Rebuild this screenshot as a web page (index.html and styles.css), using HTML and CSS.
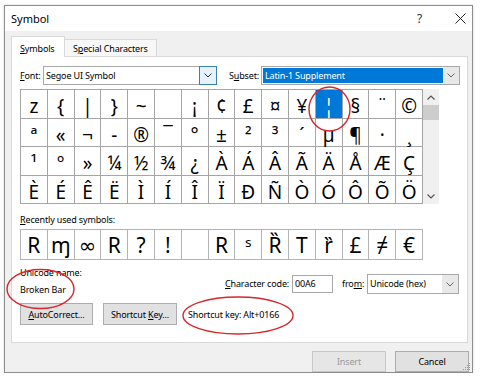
FILE: index.html
```html
<!DOCTYPE html>
<html lang="en">
<head>
    <meta charset="UTF-8">
    <meta name="viewport" content="width=device-width, initial-scale=1.0">
    <title>Symbol</title>
    <link rel="stylesheet" href="styles.css">
</head>
<body>
    <div class="dialog">
        <div class="titlebar">
            <span class="title">Symbol</span>
            <span class="help">?</span>
            <span class="close">
                <svg width="11" height="11" viewBox="0 0 11 11"><path d="M0.5 0.5 L10.5 10.5 M10.5 0.5 L0.5 10.5" stroke="#222" stroke-width="1" fill="none"/></svg>
            </span>
        </div>

        <div class="content">
            <div class="tabs">
                <div class="tab active"><u>S</u>ymbols</div>
                <div class="tab">S<u>p</u>ecial Characters</div>
            </div>

            <div class="panel">
                <div class="font-row">
                    <span class="lbl font-lbl"><u>F</u>ont:</span>
                    <div class="combo font-combo">
                        <span class="combo-text">Segoe UI Symbol</span>
                        <span class="drop hot"><svg width="8" height="5" viewBox="0 0 8 5"><path d="M0.5 0.5 L4 4 L7.5 0.5" stroke="#333" fill="none"/></svg></span>
                    </div>
                    <span class="lbl subset-lbl">S<u>u</u>bset:</span>
                    <div class="combo subset-combo">
                        <span class="combo-text selected">Latin-1 Supplement</span>
                        <span class="drop"><svg width="8" height="5" viewBox="0 0 8 5"><path d="M0.5 0.5 L4 4 L7.5 0.5" stroke="#666" fill="none"/></svg></span>
                    </div>
                </div>

                <div class="grid-wrap">
                    <div class="grid chars">
                        <span>z</span><span>{</span><span>|</span><span>}</span><span>~</span><span>&nbsp;</span><span>¡</span><span>¢</span><span>£</span><span>¤</span><span>¥</span><span class="sel">¦</span><span>§</span><span>¨</span><span>©</span>
                        <span>ª</span><span>«</span><span>¬</span><span>-</span><span>®</span><span>¯</span><span>°</span><span>±</span><span>²</span><span>³</span><span>´</span><span>µ</span><span>¶</span><span>·</span><span>¸</span>
                        <span>¹</span><span>º</span><span>»</span><span>¼</span><span>½</span><span>¾</span><span>¿</span><span>À</span><span>Á</span><span>Â</span><span>Ã</span><span>Ä</span><span>Å</span><span>Æ</span><span>Ç</span>
                        <span>È</span><span>É</span><span>Ê</span><span>Ë</span><span>Ì</span><span>Í</span><span>Î</span><span>Ï</span><span>Ð</span><span>Ñ</span><span>Ò</span><span>Ó</span><span>Ô</span><span>Õ</span><span>Ö</span>
                    </div>
                    <div class="scrollbar">
                        <span class="arrow"><svg width="8" height="5" viewBox="0 0 8 5"><path d="M0.5 4.5 L4 1 L7.5 4.5" stroke="#555" stroke-width="1.2" fill="none"/></svg></span>
                        <span class="thumb"></span>
                        <span class="track"></span>
                        <span class="arrow"><svg width="8" height="5" viewBox="0 0 8 5"><path d="M0.5 0.5 L4 4 L7.5 0.5" stroke="#555" stroke-width="1.2" fill="none"/></svg></span>
                    </div>
                </div>

                <div class="recent-lbl"><u>R</u>ecently used symbols:</div>
                <div class="grid recent">
                    <span>R</span><span>ɱ</span><span>∞</span><span>R</span><span>?</span><span>!</span><span>&nbsp;</span><span>R</span><span>ˢ</span><span>Ȑ</span><span>T</span><span>ȑ</span><span>£</span><span>≠</span><span>€</span>
                </div>

                <div class="info-row">
                    <div class="name-col">
                        <div>Unicode name:</div>
                        <div class="name">Broken Bar</div>
                    </div>
                    <div class="code-row">
                        <span class="lbl code-lbl"><u>C</u>haracter code:</span>
                        <div class="field">00A6</div>
                        <span class="lbl from-lbl">fro<u>m</u>:</span>
                        <div class="combo from-combo">
                            <span class="combo-text">Unicode (hex)</span>
                            <span class="drop"><svg width="8" height="5" viewBox="0 0 8 5"><path d="M0.5 0.5 L4 4 L7.5 0.5" stroke="#666" fill="none"/></svg></span>
                        </div>
                    </div>
                </div>

                <div class="action-row">
                    <button class="btn autocorrect"><u>A</u>utoCorrect...</button>
                    <button class="btn shortcut">Shortcut <u>K</u>ey...</button>
                    <span class="shortcut-text">Shortcut key: Alt+0166</span>
                </div>
            </div>

            <div class="footer">
                <button class="btn big" disabled>Insert</button>
                <button class="btn big">Cancel</button>
            </div>
        </div>

        <svg class="grip" width="8" height="8" viewBox="0 0 8 8">
            <rect x="6" y="0" width="1" height="1" fill="#999"/>
            <rect x="4" y="2" width="1" height="1" fill="#999"/>
            <rect x="6" y="2" width="1" height="1" fill="#999"/>
            <rect x="2" y="4" width="1" height="1" fill="#999"/>
            <rect x="4" y="4" width="1" height="1" fill="#999"/>
            <rect x="6" y="4" width="1" height="1" fill="#999"/>
            <rect x="0" y="6" width="1" height="1" fill="#999"/>
            <rect x="2" y="6" width="1" height="1" fill="#999"/>
            <rect x="4" y="6" width="1" height="1" fill="#999"/>
            <rect x="6" y="6" width="1" height="1" fill="#999"/>
        </svg>
    </div>

    <!-- hand-drawn red marks over the dialog -->
    <svg class="marks" width="480" height="377" viewBox="0 0 480 377">
        <ellipse cx="329.5" cy="109" rx="20.5" ry="22" fill="none" stroke="#d8262c" stroke-width="1.4"/>
        <ellipse cx="40.5" cy="289" rx="33.5" ry="19.5" fill="none" stroke="#d8262c" stroke-width="1.4"/>
        <ellipse cx="238" cy="315.5" rx="55" ry="18.5" fill="none" stroke="#d8262c" stroke-width="1.4"/>
    </svg>
</body>
</html>
```

FILE: styles.css
```css
body {
    margin: 0;
    background-color: #ffffff;
    font-family: "Noto Sans", sans-serif;
    font-size: 9px;
    letter-spacing: -0.15px;
    color: #000;
}

u {
    text-decoration-thickness: 1px;
    text-underline-offset: 1px;
}

.dialog {
    position: relative;
    margin: 5px 0 0 4px;
    width: 467px;
    height: 366px;
    border: 1px solid #8c8c8c;
    background-color: #f0f0f0;
    box-shadow: 0 0 3px rgba(0, 0, 0, 0.15);
    display: flex;
    flex-direction: column;
}

.titlebar {
    height: 27px;
    background: #ffffff;
    display: flex;
    align-items: center;
    padding-left: 6px;
}

.title {
    font-size: 11px;
    letter-spacing: 0;
    flex: 1;
}

.help {
    font-size: 12px;
    color: #333;
    width: 38px;
}

.close {
    width: 17px;
    display: flex;
    align-items: center;
}

.content {
    padding: 5px 4px 0 6px;
}

.tabs {
    display: flex;
    align-items: flex-end;
    height: 20px;
}

.tab {
    height: 17px;
    box-sizing: border-box;
    border: 1px solid #d9d9d9;
    border-bottom: none;
    border-left: none;
    padding: 0 0 0 8px;
    width: 92px;
    display: flex;
    align-items: center;
    white-space: nowrap;
    background: #f7f7f7;
}

.tab.active {
    height: 21px;
    width: 54px;
    margin-bottom: -1px;
    border-left: 1px solid #d9d9d9;
    background: #ffffff;
    position: relative;
    padding-top: 2px;
}

.panel {
    height: 276px;
    border: 1px solid #d9d9d9;
    background: #ffffff;
    padding: 9px 0 0 8px;
    box-sizing: content-box;
}

.lbl {
    white-space: nowrap;
    flex-shrink: 0;
}

.font-row {
    display: flex;
    align-items: center;
    height: 19px;
}

.font-lbl {
    width: 23px;
}

.subset-lbl {
    margin-left: 12px;
    width: 32px;
}

.combo {
    height: 19px;
    box-sizing: border-box;
    border: 1px solid #a8a8a8;
    display: flex;
    align-items: stretch;
    background: #fff;
    flex-shrink: 0;
}

.combo-text {
    flex: 1;
    display: flex;
    align-items: center;
    padding-left: 2px;
    white-space: nowrap;
}

.combo-text.selected {
    background: #0078d7;
    color: #fff;
    margin: 1px 0 1px 1px;
}

.drop {
    width: 16px;
    display: flex;
    align-items: center;
    justify-content: center;
    background: #e8e8e8;
}

.drop.hot {
    background: #e5f1fb;
    border: 1px solid #3c7fb1;
    margin: -1px -1px -1px 0;
}

.font-combo {
    width: 174px;
}

.subset-combo {
    width: 199px;
}

.grid-wrap {
    display: flex;
    margin-top: 4px;
}

.grid {
    display: grid;
    width: max-content;
    grid-template-columns: repeat(15, 25.8px);
    gap: 1px;
    padding: 1px;
    background: #a5a5a5;
    font-family: "Noto Sans", "DejaVu Sans", sans-serif;
    letter-spacing: 0;
}

.grid span {
    background: #fff;
    display: flex;
    justify-content: center;
    line-height: 19px;
}

.chars {
    grid-auto-rows: 27.6px;
    font-size: 19px;
}

.chars span {
    padding-top: 7px;
    box-sizing: border-box;
}

.chars .sel {
    background: #0078d7;
    color: #fff;
}

.scrollbar {
    width: 16px;
    background: #f0f0f0;
    display: flex;
    flex-direction: column;
    align-items: center;
}

.scrollbar .arrow {
    height: 16px;
    display: flex;
    align-items: center;
}

.scrollbar .thumb {
    width: 16px;
    height: 15px;
    background: #cdcdcd;
}

.scrollbar .track {
    flex: 1;
}

.recent-lbl {
    margin-top: 10px;
    line-height: 12px;
}

.recent {
    margin-top: 3px;
    grid-auto-rows: 29px;
    font-size: 21px;
    background: #b4b4b4;
}

.recent span {
    padding-top: 5px;
    box-sizing: border-box;
    line-height: 21px;
}

.info-row {
    display: flex;
    margin-top: 7px;
    line-height: 12px;
}

.name-col {
    width: 205px;
    flex-shrink: 0;
}

.name-col .name {
    margin-top: 5px;
}

.code-row {
    display: flex;
    align-items: center;
    margin-top: 7px;
    height: 20px;
}

.code-lbl {
    width: 67px;
}

.field {
    width: 41px;
    height: 18px;
    box-sizing: border-box;
    border: 1px solid #a8a8a8;
    background: #fff;
    padding-left: 2px;
    display: flex;
    align-items: center;
    flex-shrink: 0;
}

.from-lbl {
    margin-left: 9px;
    width: 25px;
}

.from-combo {
    width: 92px;
    height: 20px;
}

.action-row {
    display: flex;
    align-items: center;
    margin-top: 7px;
}

.btn {
    font-family: "Noto Sans", sans-serif;
    font-size: 9px;
    letter-spacing: -0.15px;
    height: 22px;
    background: #e1e1e1;
    border: 1px solid #adadad;
    color: #000;
    padding: 0;
    white-space: nowrap;
}

.btn.autocorrect {
    width: 73px;
}

.btn.shortcut {
    width: 74px;
    margin-left: 10px;
}

.shortcut-text {
    margin-left: 11px;
}

.footer {
    display: flex;
    justify-content: flex-end;
    gap: 9px;
    margin-top: 8px;
    margin-right: -1px;
}

.btn.big {
    width: 74px;
    height: 21px;
}

.btn:disabled {
    color: #9a9a9a;
    background: #e6e6e6;
    border-color: #c8c8c8;
}

.grip {
    position: absolute;
    right: 1px;
    bottom: 1px;
}

.marks {
    position: absolute;
    top: 0;
    left: 0;
    pointer-events: none;
}
```
